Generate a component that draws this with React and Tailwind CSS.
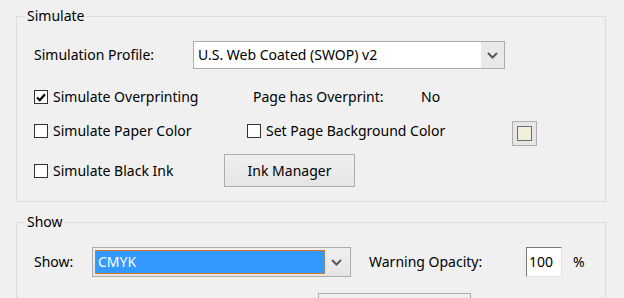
import React from 'react';

const font = { fontFamily: '"Noto Sans", "Open Sans", sans-serif' };

function Chevron() {
  return (
    <svg width="11" height="7" viewBox="0 0 11 7">
      <polyline points="1,1 5.5,5.5 10,1" fill="none" stroke="#5a5a5a" strokeWidth="2" />
    </svg>
  );
}

function Check({ checked }) {
  return (
    <span className="flex h-[14px] w-[14px] shrink-0 items-center justify-center border border-[#333333] bg-white">
      {checked && (
        <svg width="10" height="9" viewBox="0 0 10 9">
          <polyline points="1,4.5 3.8,7.2 9,1.2" fill="none" stroke="#000" strokeWidth="2.2" />
        </svg>
      )}
    </span>
  );
}

function CheckRow({ checked, label, width }) {
  return (
    <div className="flex items-center" style={{ width }}>
      <Check checked={checked} />
      <span className="ml-[5px] whitespace-nowrap">{label}</span>
    </div>
  );
}

export default function App() {
  return (
    <div className="h-[298px] w-[624px] overflow-hidden bg-[#f0f0f0] text-[14px] leading-[20px] text-black" style={font}>
      <fieldset className="ml-[16px] mt-[6px] h-[196px] w-[590px] border border-[#dcdcdc] pl-[17px]">
        <legend className="ml-[-9px] px-[2px]">Simulate</legend>

        <div className="mt-[15px] flex h-[28px] items-center">
          <span className="w-[159px]">Simulation Profile:</span>
          <div className="flex h-[28px] w-[312px] border border-[#acacac] bg-[#e9e9e9]">
            <div className="flex flex-1 items-center bg-white pl-[4px]">U.S. Web Coated (SWOP) v2</div>
            <div className="flex w-[23px] items-center justify-center"><Chevron /></div>
          </div>
        </div>

        <div className="mt-[18px] flex h-[20px] items-center">
          <CheckRow checked label="Simulate Overprinting" width={219} />
          <span className="w-[168px]">Page has Overprint:</span>
          <span>No</span>
        </div>

        <div className="mt-[12px] flex h-[24px] items-center">
          <CheckRow label="Simulate Paper Color" width={213} />
          <CheckRow label="Set Page Background Color" width={265} />
          <div className="mt-[4px] flex h-[25px] w-[25px] items-center justify-center border border-[#adadad] bg-[#e6e6e6]">
            <span className="h-[15px] w-[15px] border border-[#6d6d6d] bg-[#f1efdb]" />
          </div>
        </div>

        <div className="mt-[11px] flex h-[33px] items-center">
          <CheckRow label="Simulate Black Ink" width={190} />
          <button className="flex h-[33px] w-[131px] items-center justify-center border border-[#adadad] bg-gradient-to-b from-[#f0f0f0] to-[#e5e5e5]">
            Ink Manager
          </button>
        </div>
      </fieldset>

      <fieldset className="ml-[16px] mt-[10px] h-[120px] w-[590px] border border-[#dcdcdc] pl-[17px]">
        <legend className="ml-[-9px] px-[2px]">Show</legend>

        <div className="mt-[15px] flex h-[30px] items-center">
          <span className="w-[58px]">Show:</span>
          <div className="flex h-[30px] w-[259px] border border-[#acacac] bg-gradient-to-b from-[#f0f0f0] to-[#e5e5e5] p-[2px]">
            <div className="flex flex-1 items-center border border-dotted border-[#e07a1f] bg-[#3399ff] pl-[2px] text-white">CMYK</div>
            <div className="flex w-[23px] items-center justify-center"><Chevron /></div>
          </div>
          <span className="ml-[18px] w-[157px]">Warning Opacity:</span>
          <div className="flex h-[30px] w-[36px] items-center border border-[#7a7a7a] border-b-[#e3e3e3] border-r-[#e3e3e3] bg-white pl-[2px]">100</div>
          <span className="ml-[11px]">%</span>
        </div>

        <div className="ml-[284px] mt-[16px] h-[30px] w-[153px] border border-[#adadad] bg-gradient-to-b from-[#f0f0f0] to-[#e5e5e5]" />
      </fieldset>
    </div>
  );
}
